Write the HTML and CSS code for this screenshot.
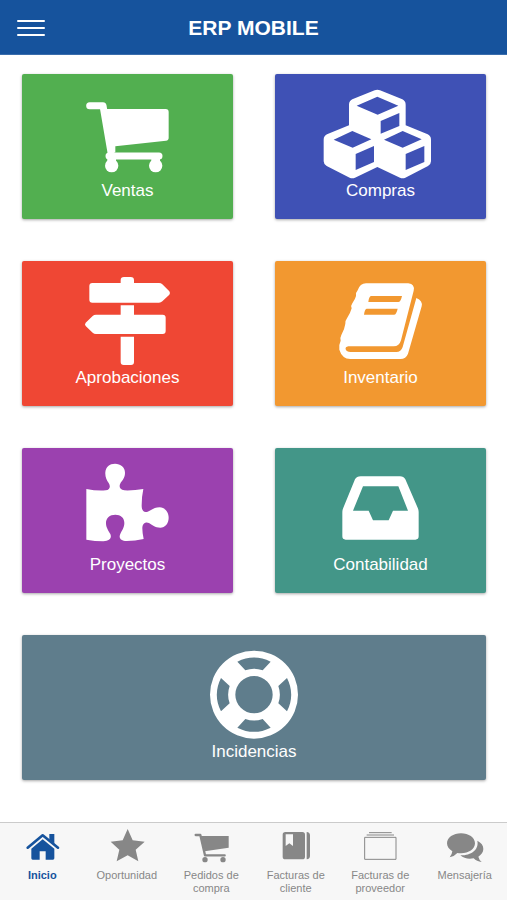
FILE: index.html
```html
<!DOCTYPE html>
<html lang="es">
<head>
<meta charset="utf-8">
<meta name="viewport" content="width=device-width, initial-scale=1">
<title>ERP MOBILE</title>
<link rel="stylesheet" href="styles.css">
</head>
<body>
<header class="topbar">
  <button class="menu" type="button" aria-label="Menú"><span></span><span></span><span></span></button>
  <h1 class="title">ERP MOBILE</h1>
</header>
<main class="grid">
  <a class="card green" href="#ventas">
    <svg class="card-icon" viewBox="159 27 360 315" aria-hidden="true">
      <path d="M224 122H264L289 268M282 273H432" fill="none" stroke="currentColor" stroke-width="21" stroke-linecap="round" stroke-linejoin="round"/>
      <path d="M262 132H452Q461 132 461 141V218Q461 226 453 227L301 244V262H280Z"/>
      <circle cx="290" cy="302" r="20"/><circle cx="422" cy="302" r="20"/>
      <path d="M277 275H303V290H277ZM409 275H435V290H409Z"/>
    </svg>
    <span>Ventas</span>
  </a>
  <a class="card indigo" href="#compras">
    <svg class="card-icon" viewBox="168 27 360 315" aria-hidden="true">
      <path fill-rule="evenodd" d="M329 76Q337 72 345 76L412 103Q422 108 422 119V181L488 208Q498 213 498 224V289Q498 298 489 303L421 338Q413 342 405 338L337 306L270 338Q262 342 254 338L185 303Q176 298 176 289V224Q176 213 186 208L252 181V119Q252 108 262 103ZM275 122L338 149L400 122L337 95ZM347 168V206L403 183V144ZM206 224L263 248L319 223L262 198ZM272 267V315L327 291V243ZM357 224L413 248L470 223L413 198ZM422 267V315L478 291V243Z"/>
    </svg>
    <span>Compras</span>
  </a>
  <a class="card red" href="#aprobaciones">
    <svg class="card-icon" viewBox="159 18 360 315" aria-hidden="true">
      <path d="M317 84V76Q317 66 327 66H347Q357 66 357 76V84H432Q438 84 442 88L463 109Q467 114 463 119L442 139Q438 143 432 143H232Q223 143 223 134V93Q223 84 232 84ZM317 151H357V179H443Q452 179 452 188V228Q452 237 443 237H243Q237 237 233 233L212 213Q208 208 212 203L233 183Q237 179 243 179H317ZM317 245H357V321Q357 330 348 330H326Q317 330 317 321Z"/>
    </svg>
    <span>Aprobaciones</span>
  </a>
  <a class="card orange" href="#inventario">
    <svg class="card-icon" viewBox="168 18 360 315" aria-hidden="true">
      <path fill-rule="evenodd" d="M303 85H430Q450 87 446 107L408 256Q403 274 386 274H250Q240 276 242 283Q245 291 256 291H394Q408 291 413 276L454 129Q474 137 470 154L429 296Q423 312 406 312H256Q231 311 223 284Q221 269 227 257Q225 247 229 240Q239 222 241 206Q241 196 246 190Q256 175 260 160Q257 151 262 145Q271 132 273 123Q272 112 278 106Q285 85 303 85ZM318 123Q312 124 310 141H400Q407 141 411 123ZM305 161Q299 162 297 179H387Q394 179 398 161Z"/>
    </svg>
    <span>Inventario</span>
  </a>
  <a class="card purple" href="#proyectos">
    <svg class="card-icon" viewBox="159 24 360 315" aria-hidden="true">
      <path d="M214 147Q245 153 272 151C286 149 287 138 281 129C275 120 270 112 271 97C272 80 284 71 300 71C317 71 330 82 330 98C330 112 323 120 317 128C311 138 313 148 328 151Q356 152 385 147Q380 170 380 196C380 214 388 219 398 215C410 210 418 202 434 202C450 203 461 216 461 233C461 250 450 263 436 263C420 263 411 255 402 249C392 244 382 250 382 265Q382 280 386 297Q360 303 335 303C319 303 311 295 315 284C320 272 328 264 328 249C328 233 317 224 301 224C284 224 273 234 273 249C273 263 280 271 286 282C291 294 284 303 265 304Q240 304 214 299Z"/>
    </svg>
    <span>Proyectos</span>
  </a>
  <a class="card teal" href="#contabilidad">
    <svg class="card-icon" viewBox="168 24 360 315" aria-hidden="true">
      <path fill-rule="evenodd" d="M287 109H405Q416 109 421 118L458 203Q461 210 461 216V289Q461 299 451 299H242Q232 299 232 289V216Q232 210 235 203L270 118Q275 109 287 109ZM294 139L264 212H311L324 241H371L384 212H429L400 139Z"/>
    </svg>
    <span>Contabilidad</span>
  </a>
  <a class="card slate wide" href="#incidencias">
    <svg class="card-icon" viewBox="132 15 360 315" aria-hidden="true">
      <path fill-rule="evenodd" d="M180 194a132 132 0 1 0 264 0a132 132 0 1 0-264 0ZM256 194a56 56 0 1 0 112 0a56 56 0 1 0-112 0ZM262 95L286 121A77 77 0 0 1 338 121L362 95A111 111 0 0 0 262 95ZM411 144L385 168A77 77 0 0 1 385 220L411 244A111 111 0 0 0 411 144ZM362 293L338 267A77 77 0 0 1 286 267L262 293A111 111 0 0 0 362 293ZM213 244L239 220A77 77 0 0 1 239 168L213 144A111 111 0 0 0 213 244Z"/>
    </svg>
    <span>Incidencias</span>
  </a>
</main>
<nav class="tabs" aria-label="Principal">
  <a class="tab active" href="#inicio" aria-current="page">
    <svg class="tab-icon" viewBox="61 30 132 132" aria-hidden="true">
      <path d="M84 98L129 61L175 98" fill="none" stroke="currentColor" stroke-width="8" stroke-linecap="round" stroke-linejoin="round"/>
      <path d="M149 57H164V86L149 74ZM95 101L129 73L164 101V130Q164 134 160 134H138V109H120V134H99Q95 134 95 130Z"/>
    </svg>
    <span>Inicio</span>
  </a>
  <a class="tab" href="#oportunidad">
    <svg class="tab-icon" viewBox="314 30 132 132" aria-hidden="true">
      <path d="M382 42L397 76L433 80L406 104L414 139L382 121L349 139L357 104L331 80L367 76Z"/>
    </svg>
    <span>Oportunidad</span>
  </a>
  <a class="tab" href="#pedidos">
    <svg class="tab-icon" viewBox="58 30 132 132" aria-hidden="true">
      <path d="M78 60H92L106 121H165" fill="none" stroke="currentColor" stroke-width="7" stroke-linecap="round" stroke-linejoin="round"/>
      <path d="M92 63H177V98L105 109Z"/><circle cx="106" cy="134" r="8"/><circle cx="160" cy="134" r="8"/>
    </svg>
    <span>Pedidos de compra</span>
  </a>
  <a class="tab" href="#facturas-cliente">
    <svg class="tab-icon" viewBox="311 30 132 132" aria-hidden="true">
      <path fill-rule="evenodd" d="M345 51H396Q404 51 404 59V125Q404 133 396 133H345Q337 133 337 125V59Q337 51 345 51ZM346 58V93L357 85L368 93V58ZM409 51Q419 52 419 61V123Q419 132 409 133Z"/>
    </svg>
    <span>Facturas de cliente</span>
  </a>
  <a class="tab" href="#facturas-proveedor">
    <svg class="tab-icon" viewBox="64 30 132 132" aria-hidden="true">
      <path d="M84 67H178V133H84ZM90 60H172M97 53H165" fill="none" stroke="currentColor" stroke-width="3"/>
    </svg>
    <span>Facturas de proveedor</span>
  </a>
  <a class="tab" href="#mensajeria">
    <svg class="tab-icon" viewBox="317 30 132 132" aria-hidden="true">
      <path d="M371 55C394 55 413 68 413 85C413 102 394 115 371 115Q365 115 360 114Q350 125 337 127Q344 119 345 109C335 103 329 95 329 85C329 68 348 55 371 55ZM420 77C432 83 438 91 438 102C438 112 432 119 423 125Q425 134 433 141Q418 140 409 130C393 133 379 130 369 121C399 122 426 105 420 77Z"/>
    </svg>
    <span>Mensajería</span>
  </a>
</nav>
</body>
</html>
```
FILE: styles.css
```css
* {
  box-sizing: border-box;
}

body {
  margin: 0;
  min-height: 100vh;
  display: flex;
  flex-direction: column;
  background: #fff;
  font-family: "Liberation Sans", Arial, sans-serif;
}

a {
  color: inherit;
  text-decoration: none;
}

svg {
  display: block;
  fill: currentColor;
}

.topbar {
  display: grid;
  grid-template-columns: 62px 1fr 62px;
  align-items: center;
  height: 55px;
  padding-top: 1px;
  border-bottom: 1px solid #3a6dac;
  background: #16539d;
  color: #fff;
}

.menu {
  display: flex;
  flex-direction: column;
  gap: 5px;
  padding: 8px 17px;
  border: 0;
  background: none;
}

.menu span {
  width: 28px;
  height: 2px;
  border-radius: 1px;
  background: #fff;
}

.title {
  margin: 0;
  font-size: 21px;
  line-height: 24px;
  text-align: center;
}

.grid {
  flex: 1;
  display: grid;
  grid-template-columns: 1fr 1fr;
  align-content: start;
  gap: 42px;
  padding: 19px 21px 20px 22px;
}

.card {
  display: flex;
  flex-direction: column;
  align-items: center;
  height: 145px;
  border-radius: 2px;
  box-shadow: 0 1px 3px rgba(0, 0, 0, 0.35);
  color: #fff;
  font-size: 17px;
  line-height: 24px;
}

.card-icon {
  width: 120px;
  height: 105px;
}

.wide {
  grid-column: 1 / -1;
}

.green { background: #52af50; }
.indigo { background: #3f51b5; }
.red { background: #ef4734; }
.orange { background: #f29830; }
.purple { background: #9b41af; }
.teal { background: #439688; }
.slate { background: #5f7d8c; }

.tabs {
  display: grid;
  grid-template-columns: repeat(6, 1fr);
  height: 78px;
  padding-top: 2px;
  border-top: 1px solid #cbcbcb;
  background: #f7f7f7;
  color: #878787;
}

.tab {
  display: flex;
  flex-direction: column;
  align-items: center;
  padding: 0 8px;
  font-size: 11px;
  line-height: 13px;
  text-align: center;
}

.tab-icon {
  width: 44px;
  height: 44px;
}

.active {
  color: #16539d;
  font-weight: bold;
}
```
